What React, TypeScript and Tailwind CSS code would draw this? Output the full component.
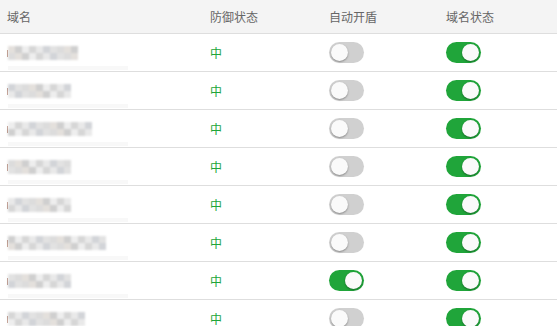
import React from "react";

const rows = [
  { w: 70, auto: false, seed: 1 },
  { w: 64, auto: false, seed: 2 },
  { w: 84, auto: false, seed: 3 },
  { w: 64, auto: false, seed: 4 },
  { w: 64, auto: false, seed: 5 },
  { w: 98, auto: false, seed: 6 },
  { w: 64, auto: true, seed: 7 },
  { w: 78, auto: false, seed: 8 },
];

const shades = ["#d6d6d6", "#e2e2e2", "#cfcfcf", "#e9e9e9", "#dcdcdc", "#eeeeee", "#d2d4d8", "#e4e0dc"];

function Mosaic({ w, seed }: { w: number; seed: number }) {
  const cols = Math.floor(w / 7);
  const cells = [0, 1].map((r) =>
    Array.from({ length: cols }, (_, i) => shades[(i * 3 + r * 5 + seed * 7) % shades.length])
  );
  return (
    <div className="flex items-center">
      <div className="w-[1px] h-[7px] bg-[#b08070] self-end mb-[3px]" />
      <div className="flex flex-col blur-[0.9px]">
        {cells.map((row, r) => (
          <div key={r} className="flex">
            {row.map((c, i) => (
              <div key={i} className="w-[7px] h-[7px]" style={{ background: c }} />
            ))}
          </div>
        ))}
      </div>
    </div>
  );
}

function Toggle({ on }: { on: boolean }) {
  return (
    <div
      className={`w-[35px] h-[21px] rounded-full p-[2px] flex ${on ? "bg-[#20a53a] justify-end" : "bg-[#d0d0d0] justify-start"}`}
    >
      <div className="w-[17px] h-[17px] rounded-full bg-[#fafafa] shadow-[0_1px_2px_rgba(0,0,0,0.35)]" />
    </div>
  );
}

export default function App() {
  return (
    <div
      className="w-[557px] h-[326px] overflow-hidden bg-white text-[12px]"
      style={{ fontFamily: '"Noto Sans CJK SC", "Noto Sans", sans-serif' }}
    >
      <div className="grid grid-cols-[210px_119px_117px_1fr] h-[34px] items-center bg-[#f4f4f4] text-[#666] border-b border-[#dedede]">
        <div className="pl-[7px]">域名</div>
        <div>防御状态</div>
        <div>自动开盾</div>
        <div>域名状态</div>
      </div>
      {rows.map((r, idx) => (
        <div
          key={idx}
          className="grid grid-cols-[210px_119px_117px_1fr] h-[38px] items-center border-b border-[#dedede] relative"
        >
          <div className="pl-[7px]">
            <Mosaic w={r.w} seed={r.seed} />
          </div>
          <div className="text-[#20a53a]">中</div>
          <div>
            <Toggle on={r.auto} />
          </div>
          <div>
            <Toggle on={true} />
          </div>
          <div className="absolute left-[8px] bottom-[1px] w-[120px] h-[4px] bg-[#f8f8f8]" />
        </div>
      ))}
    </div>
  );
}
